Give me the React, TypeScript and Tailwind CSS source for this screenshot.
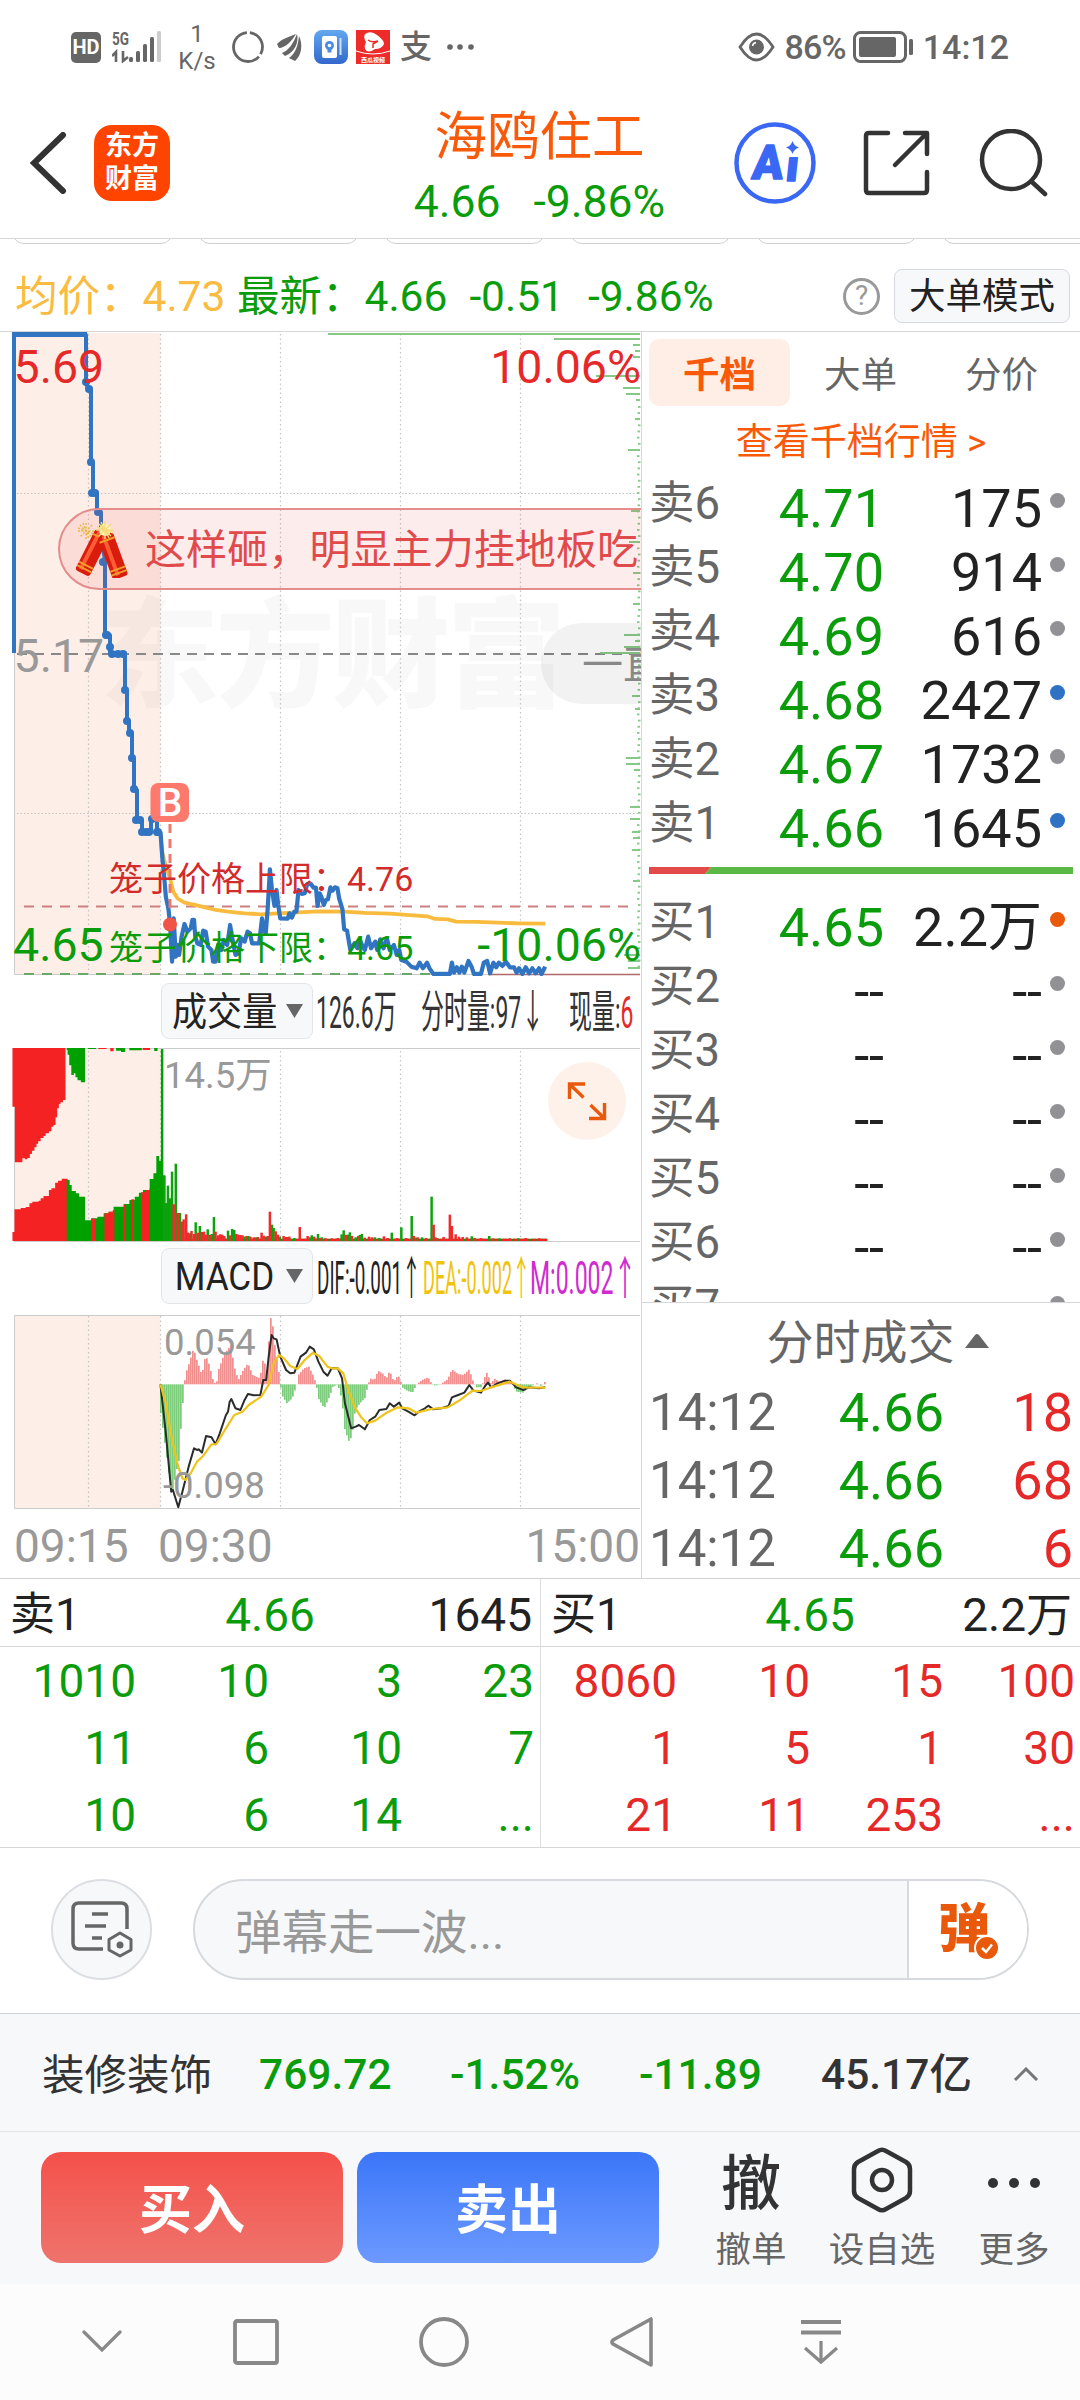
import { ReactNode } from 'react';

type Point = [number, number];

interface Level {
  label: string;
  price: string;
  volume: string;
  dot: 'gray' | 'blue' | 'orange';
}

const asks: Level[] = [
  { label: '卖6', price: '4.71', volume: '175', dot: 'gray' },
  { label: '卖5', price: '4.70', volume: '914', dot: 'gray' },
  { label: '卖4', price: '4.69', volume: '616', dot: 'gray' },
  { label: '卖3', price: '4.68', volume: '2427', dot: 'blue' },
  { label: '卖2', price: '4.67', volume: '1732', dot: 'gray' },
  { label: '卖1', price: '4.66', volume: '1645', dot: 'blue' },
];

const bids: Level[] = [
  { label: '买1', price: '4.65', volume: '2.2万', dot: 'orange' },
  { label: '买2', price: '--', volume: '--', dot: 'gray' },
  { label: '买3', price: '--', volume: '--', dot: 'gray' },
  { label: '买4', price: '--', volume: '--', dot: 'gray' },
  { label: '买5', price: '--', volume: '--', dot: 'gray' },
  { label: '买6', price: '--', volume: '--', dot: 'gray' },
  { label: '买7', price: '--', volume: '--', dot: 'gray' },
];

const trades = [
  { time: '14:12', price: '4.66', volume: '18' },
  { time: '14:12', price: '4.66', volume: '68' },
  { time: '14:12', price: '4.66', volume: '6' },
];

const sellQueue = ['1010', '10', '3', '23', '11', '6', '10', '7', '10', '6', '14', '...'];
const buyQueue = ['8060', '10', '15', '100', '1', '5', '1', '30', '21', '11', '253', '...'];

const dotColors = {
  gray: 'bg-[#919196]',
  blue: 'bg-[#2f72c4]',
  orange: 'bg-[#e8590c]',
};

// Call auction part of the price line, px
const auction: Point[] = [
  [14, 653], [14, 335], [86, 335], [86, 383], [88, 388], [91, 389], [91, 462], [93, 463], [93, 492], [97, 493],
  [97, 511], [101, 512], [101, 530], [105, 562], [105, 634], [110, 635], [110, 653], [125, 653], [125, 690],
  [127, 691], [127, 721], [129, 722], [129, 733], [132, 734], [132, 758], [134, 759], [134, 789], [137, 790],
  [137, 820], [142, 820], [142, 832], [151, 832], [151, 820], [157, 820], [157, 832], [160, 832],
];
const auctionDots: Point[] = [
  [86, 382], [89, 389], [91, 462], [92, 493], [95, 493], [98, 512], [103, 562], [106, 635], [107, 635], [110, 647],
  [112, 654], [118, 654], [123, 654], [125, 690], [127, 721], [130, 733], [132, 758], [134, 789], [136, 820], [140, 820],
  [142, 832], [146, 832], [149, 832], [152, 819], [157, 832], [158, 832],
];

// Continuous trading, plot units
const price: Point[] = [
  [387, 515], [392, 600], [396, 650], [400, 710], [406, 745], [410, 790], [415, 905], [419, 775], [424, 890], [428, 855],
  [432, 885], [438, 830], [445, 792], [452, 815], [460, 805], [464, 780], [468, 780], [471, 830], [476, 850], [484, 855],
  [490, 812], [496, 815], [502, 860], [510, 870], [514, 905], [520, 905], [526, 855], [534, 870], [540, 840], [548, 855],
  [555, 795], [561, 840], [568, 885], [575, 880], [582, 835], [590, 845], [597, 815], [603, 820], [608, 850], [625, 850],
  [632, 775], [637, 815], [641, 820], [646, 740], [651, 628], [656, 690], [662, 738], [667, 690], [671, 735], [676, 775],
  [694, 776], [698, 760], [704, 773], [710, 755], [715, 755], [720, 690], [728, 702], [735, 700], [741, 672], [750, 672],
  [756, 683], [762, 683], [766, 738], [771, 700], [775, 710], [781, 735], [786, 720], [791, 718], [797, 682], [802, 692],
  [808, 682], [814, 685], [818, 715], [826, 748], [830, 808], [837, 812], [845, 870], [855, 850], [862, 865], [868, 840],
  [875, 860], [880, 870], [888, 830], [895, 865], [905, 845], [910, 870], [917, 838], [925, 865], [933, 835], [940, 870],
  [950, 855], [957, 885], [963, 870], [968, 900], [980, 905], [992, 920], [1005, 925], [1012, 908], [1020, 925],
  [1030, 908], [1036, 925], [1045, 942], [1085, 942], [1090, 908], [1095, 938], [1102, 922], [1108, 938], [1114, 920],
  [1120, 938], [1130, 903], [1138, 922], [1143, 942], [1160, 942], [1167, 908], [1175, 903], [1182, 940], [1190, 908],
  [1197, 922], [1203, 908], [1212, 918], [1220, 905], [1230, 922], [1240, 922], [1246, 938], [1252, 925], [1260, 942],
  [1268, 922], [1276, 940], [1284, 925], [1292, 940], [1300, 925], [1306, 942], [1315, 920],
];

const average: Point[] = [
  [387, 520], [390, 570], [396, 600], [403, 630], [410, 655], [418, 695], [428, 715], [445, 728], [470, 735], [495, 742],
  [520, 750], [550, 755], [590, 760], [630, 763], [670, 760], [720, 757], [770, 754], [830, 755], [880, 759], [940, 761],
  [980, 765], [1030, 769], [1050, 777], [1080, 778], [1100, 785], [1150, 786], [1200, 788], [1250, 790], [1315, 791],
];

// Resting volume per price on the right edge: [y, width]
const depth: Point[] = [
  [334, 312], [339, 86], [345, 7], [351, 5], [357, 7], [376, 44], [388, 17], [394, 14], [400, 4], [419, 5], [450, 12],
  [511, 9], [542, 11], [573, 7], [604, 7], [635, 16], [641, 5], [647, 16], [653, 40], [696, 8], [709, 5], [758, 14],
  [764, 14], [770, 6], [807, 10], [819, 10], [832, 8], [838, 7], [850, 8], [881, 7], [955, 16], [961, 12], [968, 12],
];
const ticks = Array.from({ length: 92 }, (_, i) => 407 + i * 6.15).filter((y) => y < 972);

// Volume bars, plot units: [x, top]
const redVolume: Point[] = [
  [419, 523], [429, 549], [439, 575], [443, 568], [449, 553], [453, 608], [462, 603], [468, 612], [477, 608], [487, 606],
  [492, 605], [497, 614], [506, 615], [520, 605], [526, 616], [531, 613], [536, 614], [541, 618], [555, 616], [570, 612],
  [575, 614], [580, 615], [585, 616], [595, 618], [604, 620], [612, 622], [622, 621], [631, 608], [636, 617], [646, 618],
  [651, 545], [665, 604], [670, 614], [684, 618], [690, 621], [698, 620], [723, 591], [742, 618], [758, 620], [772, 624],
  [785, 625], [800, 625], [815, 624], [834, 615], [849, 618], [864, 618], [880, 623], [890, 620], [897, 622], [926, 619],
  [935, 624], [958, 624], [980, 624], [998, 618], [1008, 622], [1028, 624], [1046, 584], [1055, 624], [1070, 621],
  [1085, 554], [1090, 588], [1099, 613], [1107, 620], [1116, 621], [1126, 622], [1145, 624], [1160, 624], [1190, 625],
  [1230, 625], [1268, 624], [1300, 625],
];
const greenVolume: Point[] = [
  [396, 438], [401, 520], [405, 467], [410, 505], [415, 425], [424, 401], [434, 549], [458, 610], [472, 577], [482, 588],
  [501, 598], [511, 612], [516, 561], [550, 602], [560, 597], [565, 600], [590, 620], [599, 618], [617, 622], [641, 620],
  [656, 584], [660, 594], [675, 620], [694, 621], [710, 624], [748, 622], [752, 616], [767, 612], [776, 622], [824, 613],
  [829, 601], [839, 614], [844, 607], [858, 622], [868, 615], [873, 612], [904, 622], [915, 624], [945, 608], [968, 592],
  [993, 558], [1003, 623], [1018, 622], [1041, 500], [1050, 622], [1138, 619], [1180, 618], [1205, 625], [1250, 625],
];

// Histogram outline and both averages of the MACD, plot units
const histogram: Point[] = [
  [387, 330], [400, 450], [415, 590], [425, 515], [432, 480], [437, 370], [443, 280], [445, 253], [447, 225], [455, 195],
  [467, 145], [475, 180], [487, 225], [496, 165], [505, 195], [515, 245], [522, 253], [527, 210], [540, 165], [557, 135],
  [565, 200], [575, 240], [587, 210], [598, 190], [610, 225], [627, 235], [635, 175], [645, 215], [651, 60], [656, 48],
  [661, 120], [670, 190], [676, 250], [680, 285], [692, 310], [705, 295], [716, 253], [720, 225], [733, 205], [745, 200],
  [755, 225], [763, 253], [768, 295], [782, 325], [795, 290], [803, 260], [815, 253], [825, 300], [832, 390], [843, 428],
  [850, 400], [857, 330], [868, 310], [880, 295], [888, 253], [893, 235], [903, 240], [912, 212], [925, 222], [932, 235],
  [940, 212], [950, 245], [958, 230], [965, 230], [968, 253], [972, 264], [982, 272], [995, 278], [1005, 253],
  [1018, 240], [1033, 232], [1042, 253], [1050, 257], [1062, 253], [1080, 238], [1090, 208], [1105, 222], [1118, 225],
  [1132, 208], [1140, 240], [1150, 262], [1162, 262], [1168, 235], [1175, 217], [1185, 253], [1192, 235], [1205, 245],
  [1220, 238], [1236, 250], [1245, 275], [1262, 278], [1275, 262], [1295, 250], [1305, 258], [1315, 245],
];
const dif: Point[] = [
  [387, 253], [400, 400], [413, 575], [417, 570], [430, 622], [440, 575], [455, 500], [468, 445], [475, 450], [479, 448],
  [487, 458], [497, 408], [510, 412], [520, 433], [530, 400], [545, 345], [550, 335], [554, 305], [558, 297], [568, 325],
  [580, 330], [590, 300], [598, 282], [612, 286], [628, 285], [635, 240], [642, 240], [648, 170], [655, 105], [660, 115],
  [667, 118], [676, 170], [690, 210], [700, 220], [710, 218], [725, 170], [738, 158], [747, 140], [757, 148], [768, 185],
  [780, 215], [790, 227], [800, 205], [815, 205], [825, 235], [832, 310], [847, 385], [858, 380], [866, 375], [880, 388],
  [892, 360], [905, 350], [915, 330], [932, 327], [940, 310], [950, 320], [963, 308], [970, 325], [985, 335], [1000, 346],
  [1010, 335], [1025, 325], [1033, 317], [1045, 328], [1065, 325], [1082, 318], [1090, 292], [1105, 285], [1120, 278],
  [1132, 255], [1142, 272], [1160, 278], [1170, 258], [1177, 248], [1185, 262], [1200, 250], [1218, 242], [1230, 242],
  [1245, 262], [1262, 270], [1275, 262], [1300, 265], [1315, 262],
];
const dea: Point[] = [
  [387, 253], [400, 310], [415, 420], [430, 500], [440, 535], [447, 540], [460, 520], [475, 485], [490, 468], [510, 433],
  [522, 432], [540, 395], [565, 345], [585, 335], [600, 315], [630, 290], [648, 255], [660, 190], [673, 165], [685, 175],
  [700, 198], [717, 207], [735, 180], [755, 158], [770, 168], [790, 200], [800, 205], [815, 205], [828, 220], [840, 270],
  [855, 320], [870, 350], [885, 370], [905, 362], [930, 340], [960, 322], [985, 325], [1005, 338], [1040, 327],
  [1080, 322], [1110, 300], [1140, 272], [1160, 273], [1185, 262], [1230, 245], [1260, 262], [1315, 263],
];

const toPath = (points: Point[]) => points.map(([x, y], i) => `${i ? 'L' : 'M'}${x} ${y}`).join(' ');

const valueAt = (points: Point[], x: number) => {
  const i = points.findIndex((p) => p[0] >= x);
  if (i <= 0) return points[0][1];
  const [x0, y0] = points[i - 1];
  const [x1, y1] = points[i];
  return y0 + ((y1 - y0) * (x - x0)) / (x1 - x0);
};

function Grid({ top, bottom }: { top: number; bottom: number }) {
  return (
    <g stroke="#c4c4c4" strokeWidth="1.2" strokeDasharray="1.5 3">
      {[88.5, 160.5, 280.5, 400.5, 520.5].map((x) => (
        <path key={x} d={`M${x} ${top}V${bottom}`} />
      ))}
    </g>
  );
}

function PriceChart() {
  return (
    <svg className="block" width="641" height="644" viewBox="0 332 641 644" fontSize="46.5">
      <rect x="14" y="333" width="146.5" height="641" fill="#fdeee8" />
      <text x="100" y="698" fontSize="119" fontWeight="900" fill="#000" fillOpacity="0.028" textLength="466">东方财富</text>
      <Grid top={334} bottom={974} />
      <path d="M17 493.5H640M17 813.5H640" stroke="#c4c4c4" strokeWidth="1.2" strokeDasharray="1.5 2" />
      <path d="M14.5 333V974.5H640" stroke="#ccc" fill="none" />
      <path d="M488 974.5H640" stroke="#b06a6a" strokeWidth="1.4" />
      <path d="M17 654H640" stroke="#888" strokeWidth="2" strokeDasharray="10 7" />
      <g fill="#86c986">
        {depth.map(([y, w]) => (
          <rect key={y} x={640 - w} y={y - 1} width={w} height="2" />
        ))}
        {ticks.map((y, i) => (
          <rect key={y} x={638 - (i % 3) * 0.5} y={y - 1} width="2.5" height="1.8" />
        ))}
      </g>
      <path d="M24 906.5H632" stroke="#cc8080" strokeWidth="2" strokeDasharray="10 8" />
      <path d="M24 974H430" stroke="#6aa86a" strokeWidth="2" strokeDasharray="10 8" />
      <g fill="none" strokeLinejoin="round">
        <path d={toPath(average)} transform="translate(0 660) scale(.4146 .3333)" vectorEffect="non-scaling-stroke" stroke="#f9bb3d" strokeWidth="3.8" />
        <path d={toPath(auction)} stroke="#3074c2" strokeWidth="4" />
        <path d="M12 334.5H87" stroke="#3074c2" strokeWidth="5" />
        <path d={toPath(price)} transform="translate(0 660) scale(.4146 .3333)" vectorEffect="non-scaling-stroke" stroke="#3074c2" strokeWidth="4.2" />
      </g>
      <g fill="#3074c2">
        {auctionDots.map(([x, y], i) => (
          <circle key={i} cx={x} cy={y} r="4" />
        ))}
      </g>
      <path d="M170 824V908" stroke="#ee7a6c" strokeWidth="3" strokeDasharray="9 6" />
      <circle cx="170" cy="924.5" r="7" fill="#ee5548" />
      <rect x="150.5" y="783" width="38.5" height="39" rx="8" fill="#fd796b" />
      <text x="170" y="816" fontSize="39" fontWeight="500" fill="#fff" textAnchor="middle">B</text>
      <g fontSize="34">
        <text x="109" y="891" fill="#d22b2b">笼子价格上限：4.76</text>
        <text x="109" y="959.5" fill="#0a9c0a">笼子价格下限：4.65</text>
      </g>
      <text x="13.5" y="383" fill="#e52929">5.69</text>
      <text x="641" y="383" fill="#e52929" textAnchor="end">10.06%</text>
      <text x="13.5" y="672" fill="#999">5.17</text>
      <text x="13" y="961" fill="#0a9c0a">4.65</text>
      <text x="641" y="961" fill="#0a9c0a" textAnchor="end">-10.06%</text>
    </svg>
  );
}

function VolumeChart() {
  return (
    <svg className="block" width="641" height="199" viewBox="0 1045 641 199">
      <rect x="14" y="1048" width="146.5" height="193" fill="#fdeee8" />
      <Grid top={1051} bottom={1241} />
      <path d="M14 1048.5H640M14.5 1048V1241M14 1241.5H640" stroke="#ccc" fill="none" />
      <g transform="translate(0 1030) scale(.4146 .3333)">
        <path fill="#f42222" d="M30 54H158V210H152V217H146V222H142V235H138V262H134V285H129V290H124V304H118V310H110V318H105V324H98V334H92V341H88V352H83V362H77V372H72V384H66V388H60V385H54V397H36V230H30Z" />
        <path fill="#00a000" d="M161 54H205V157H195V151H187V142H182V130H178V135H172V106H167V74H163V60H161Z" />
        <path fill="#f42222" d="M30 633V606H35V538H50V534H62V531H71V520H78V515H93V512H98V505H105V498H118V480H124V475H133V458H140V452H149V446H163V633Z" />
        <path fill="#00a000" d="M161 633V450H168V465H173V483H183V490H191V500H205V571H220V565H235V560H250V550H262V545H274V530H298V522H312V510H325V500H335V488H345V480H361V447H370V430H377V378H384V392H388V57H394V436H399V520H411V545H420V633Z" />
        <path fill="#f42222" d="M220 633V566H230V633ZM252 633V550H262V545H272V540H276V633ZM299 633V524H303V633ZM317 633V508H323V633ZM340 633V487H350V480H360V475H361V633Z" />
        <path fill="#00a000" d="M212 54H232V57H212ZM280 54H302V66H292V62H280ZM312 54H342V61H312ZM372 54H380V63H372Z" />
        <path fill="#f42222" d="M237 54H257V57H237ZM266 54H274V64H266ZM344 54H362V60H344Z" />
        <path fill="#00a000" d="M452 626H1320V633H452Z" />
        <path stroke="#f42222" strokeWidth="7" strokeDasharray="22 5 38 7 12 4" d="M418 629.5H1320" />
        {greenVolume.map(([x, y]) => (
          <rect key={x} x={x - 3} y={y} width="6" height={633 - y} fill="#0ea30e" />
        ))}
        {redVolume.map(([x, y]) => (
          <rect key={x} x={x - 3} y={y} width="6" height={633 - y} fill="#ef2b2b" />
        ))}
      </g>
      <text x="164" y="1088" fontSize="36.5" fill="#999">14.5万</text>
      <circle cx="587" cy="1101" r="39" fill="#fef1ea" />
      <path d="M569.5 1099V1084H585M570 1084.5L583.5 1097.5M604.5 1103V1118.5H589M604 1118L590.5 1105" stroke="#e8590c" strokeWidth="3.4" fill="none" />
    </svg>
  );
}

function MacdChart() {
  const bars = Array.from({ length: 193 }, (_, i) => 388 + i * 4.824);
  return (
    <svg className="block" width="641" height="202" viewBox="0 1308 641 202" fontSize="36.5">
      <rect x="14" y="1315" width="146.5" height="193" fill="#fdeee8" />
      <Grid top={1316} bottom={1508} />
      <path d="M640 1315.5H14.5V1508.5H640" stroke="#ccc" fill="none" />
      <g transform="translate(0 1300) scale(.4146 .3333)">
        {bars.map((x) => {
          const y = valueAt(histogram, x);
          return <rect key={x} x={x - 1.8} y={Math.min(y, 253)} width="3.7" height={Math.abs(253 - y)} fill={y < 253 ? '#ef8080' : '#6cc66c'} />;
        })}
      </g>
      <text x="164" y="1355" fill="#999">0.054</text>
      <g transform="translate(0 1300) scale(.4146 .3333)" fill="none" strokeLinejoin="round">
        <path d={toPath(dif)} vectorEffect="non-scaling-stroke" stroke="#2b2b2b" strokeWidth="2" />
        <path d={toPath(dea)} vectorEffect="non-scaling-stroke" stroke="#efc31b" strokeWidth="2.2" />
      </g>
      <text x="163" y="1498" fill="#999">-0.098</text>
    </svg>
  );
}

function IndicatorButton({ children }: { children: ReactNode }) {
  return (
    <button className="ml-[161px] flex h-14 w-[152px] shrink-0 items-center rounded-lg border border-[#e3e5e8] bg-[#f7f8fa] pl-[10px] text-[39px] leading-none text-[#222]">
      <span className="w-[114px] pt-[3px] text-left"><span className="inline-block origin-left scale-x-90 whitespace-nowrap">{children}</span></span>
      <svg width="17" height="14"><path d="M0 0H17L8.5 14Z" fill="#666" /></svg>
    </button>
  );
}

function Danmaku() {
  return (
    <div className="absolute left-[58px] top-[176px] flex h-[82px] w-[900px] items-center rounded-full border-2 border-[#e58c8c] bg-[#f04848]/10">
      <svg className="ml-[16px]" width="54" height="58" viewBox="0 0 54 58">
        <g stroke="#e8b84a" strokeWidth="1.4">
          <path d="M10 3V19M2 11H18M4 5L16 17M16 5L4 17M7 3L13 19M2 8L18 14" strokeDasharray="2 1.5" />
        </g>
        <g transform="rotate(27 26 14)">
          <rect x="18" y="12" width="16" height="46" rx="3" fill="#d91c0c" />
          <rect x="21" y="13" width="4" height="42" fill="#ff5b35" />
          <path d="M18 18H34M18 49H34M18 53H34" stroke="#f0a02a" strokeWidth="2" />
        </g>
        <g transform="rotate(-20 30 14)">
          <rect x="21" y="14" width="16" height="46" rx="3" fill="#d91c0c" />
          <rect x="25" y="15" width="4" height="42" fill="#ff5b35" />
          <path d="M21 20H37M21 51H37M21 55H37" stroke="#f0a02a" strokeWidth="2" />
        </g>
        <circle cx="29" cy="10" r="6" fill="#fff6c0" />
        <path d="M29 1V19M20 10H38M23 4L35 16M35 4L23 16M25 2L33 18M21 7L37 13" stroke="#f6dc7c" strokeWidth="1.4" />
      </svg>
      <span className="ml-[15px] whitespace-nowrap pt-[3px] text-[41.1px] leading-none text-[#e04a4a]">这样砸，明显主力挂地板吃</span>
    </div>
  );
}

function BookRow({ level }: { level: Level }) {
  return (
    <div className="flex h-16 items-center">
      <span className="w-[96px] text-[45.5px] leading-[56px] text-[#666]">{level.label}</span>
      <span className={`w-[139px] pt-[9px] text-right text-[54px] leading-[54px] ${level.price === '--' ? 'text-[#222]' : 'text-[#0a9c0a]'}`}>{level.price}</span>
      <span className="w-[158px] whitespace-nowrap pt-[9px] text-right text-[54px] leading-[54px] text-[#222]">{level.volume}</span>
      <span className={`mb-[7px] ml-2 size-[15px] rounded-full ${dotColors[level.dot]}`} />
    </div>
  );
}

function Queue({ values, color }: { values: string[]; color: string }) {
  return (
    <div className={`grid w-[540px] grid-cols-[136px_133px_133px_132px] pt-[1px] text-right text-[46px] leading-[67px] ${color}`}>
      {values.map((v, i) => (
        <span key={i}>{v}</span>
      ))}
    </div>
  );
}

function StatusBar() {
  return (
    <div className="flex h-[94px] items-center pl-[71px] pr-[71px] text-[#666]">
      <span className="flex h-[31px] w-[30px] items-center justify-center rounded-[5px] bg-[#666] text-[20px] font-bold leading-none text-white">HD</span>
      <svg className="ml-[11px]" width="50" height="32" viewBox="0 0 50 32" fill="#666">
        <text x="0" y="14" fontSize="19" fontWeight="700" textLength="17" lengthAdjust="spacingAndGlyphs">5G</text>
        <path d="M4 31V21L0 25M11 20V30L16 26" stroke="#666" strokeWidth="2.6" fill="none" />
        <rect x="17" y="26" width="4" height="5" rx="1.5" />
        <rect x="24" y="20" width="4" height="11" rx="1.5" />
        <rect x="31" y="13" width="4" height="18" rx="1.5" />
        <rect x="38" y="6" width="4" height="25" rx="1.5" />
        <rect x="45" y="0" width="4" height="31" rx="1.5" fill="#ccc" />
      </svg>
      <div className="ml-[17px] flex w-[36px] flex-col items-center pt-[2px] text-[24px] leading-[27px]">
        <span>1</span>
        <span>K/s</span>
      </div>
      <svg className="ml-[16px]" width="34" height="34" viewBox="0 0 34 34"><circle cx="17" cy="17" r="14.5" fill="none" stroke="#666" strokeWidth="2.8" strokeDasharray="7.4 3 56.4 3 21.3" /></svg>
      <svg className="ml-[12px]" width="26" height="28" viewBox="0 0 26 28" fill="#666">
        <path d="M0 11C6 5 12 4 19 1C15 8 8 15 2 15Z" />
        <path d="M5 20C12 17 16 11 20 1C22 9 18 19 8 23Z" />
        <path d="M12 25C19 20 21 12 22 3C26 11 25 22 18 28Z" />
      </svg>
      <svg className="ml-[11px]" width="34" height="34" viewBox="0 0 34 34">
        <defs>
          <linearGradient id="tip" x1="0" y1="0" x2="0" y2="1"><stop stopColor="#62a8ee" /><stop offset="1" stopColor="#3268cc" /></linearGradient>
        </defs>
        <rect width="34" height="34" rx="8" fill="url(#tip)" />
        <rect x="8" y="6" width="15" height="22" rx="2" fill="#fff" />
        <path d="M26.5 8V25" stroke="#cfe2fb" strokeWidth="2" />
        <circle cx="15.5" cy="15.5" r="4.5" fill="#4c8cdf" />
        <path d="M13.5 19H17.5V22.5H13.5Z" fill="#4c8cdf" />
        <circle cx="15.5" cy="15.5" r="1.8" fill="#fff" />
      </svg>
      <svg className="ml-[8px]" width="34" height="34" viewBox="0 0 34 34">
        <rect width="34" height="34" fill="#ee2a2a" />
        <path d="M9 4Q15 0 21 5Q28 10 28 14Q26 19 19 19Q12 24 9 19Q8 16 10 12Q7 7 9 4Z" fill="#fff" />
        <path d="M12 10Q16 13 22 11L17 14V18" stroke="#ee2a2a" strokeWidth="1.5" fill="none" />
        <path d="M0 21Q17 27 34 21" stroke="#fff" fill="none" />
        <text x="17" y="31.5" fontSize="6" fontWeight="700" fill="#fff" textAnchor="middle">西瓜视频</text>
      </svg>
      <span className="ml-[10px] w-[33px] text-[32px] font-medium leading-none">支</span>
      <svg className="ml-[13px]" width="28" height="8" fill="#666"><circle cx="4" cy="4" r="2.8" /><circle cx="14" cy="4" r="2.8" /><circle cx="25" cy="4" r="2.8" /></svg>

      <svg className="ml-auto" width="37" height="30" viewBox="0 0 37 30">
        <path d="M2 15Q18.5 -11 35 15Q18.5 41 2 15Z" fill="none" stroke="#666" strokeWidth="2.8" />
        <circle cx="18.5" cy="15" r="7.5" fill="#666" />
        <path d="M14.5 14Q15 11 18 10.5" stroke="#fff" strokeWidth="1.5" fill="none" />
      </svg>
      <span className="ml-[9px] text-[34px] font-medium leading-none tracking-[-0.8px]">86%</span>
      <svg className="ml-[7px]" width="60" height="32" viewBox="0 0 60 32">
        <rect x="1.5" y="1.5" width="51" height="29" rx="6" fill="none" stroke="#666" strokeWidth="3" />
        <rect x="6" y="6" width="37" height="20" rx="2" fill="#666" />
        <rect x="56" y="8" width="4" height="16" rx="1.5" fill="#666" />
      </svg>
      <span className="ml-[10px] text-[34px] font-medium leading-none">14:12</span>
    </div>
  );
}

function Header() {
  return (
    <header className="grid h-[145px] grid-cols-[1fr_auto_1fr] items-center border-b border-[#d5d6d8]">
      <div className="flex items-center pb-[6px] pl-[30px]">
        <svg width="38" height="62" viewBox="0 0 38 62"><path d="M33 3L4 31L33 59" fill="none" stroke="#333" strokeWidth="6" strokeLinecap="round" strokeLinejoin="miter" /></svg>
        <div className="ml-[26px] flex size-[76px] flex-col items-center justify-center rounded-[18px] bg-[#ff4400] text-[27px] font-bold leading-[33px] text-white">
          <span>东方</span>
          <span>财富</span>
        </div>
      </div>
      <div className="pr-[1px] text-center leading-none">
        <h1 className="pt-[5px] text-[52.5px] leading-[72px] text-[#f95a0a]">海鸥住工</h1>
        <p className="flex justify-center gap-[33px] pb-[5px] text-[44.5px] leading-[58px] text-[#0a9c0a]">
          <span>4.66</span>
          <span>-9.86%</span>
        </p>
      </div>
      <div className="flex items-center justify-end pb-[6px] pr-[31px]">
        <svg width="82" height="82" viewBox="0 0 82 82">
          <circle cx="41" cy="41" r="38.5" fill="none" stroke="#3a68f5" strokeWidth="4.5" />
          <g fontSize="48" fontWeight="900" fill="#3a68f5" stroke="#3a68f5" strokeWidth="1.5" strokeLinejoin="round">
            <text transform="translate(17 57) skewX(-6)" textLength="31" lengthAdjust="spacingAndGlyphs">A</text>
            <text transform="translate(50.5 59) skewX(-6) scale(.95 .92)">ı</text>
          </g>
          <path d="M58.5 19Q60 24 65 25.5Q60 27 58.5 32Q57 27 52 25.5Q57 24 58.5 19Z" fill="#3a68f5" />
        </svg>
        <svg className="ml-[47px]" width="68" height="68" viewBox="0 0 68 68" fill="none" stroke="#333" strokeWidth="4.5" strokeLinecap="round" strokeLinejoin="round">
          <path d="M25 4H6Q3 4 3 7V61Q3 64 6 64H61Q64 64 64 61V43M42 4H64V25M62 6L32 36" />
        </svg>
        <svg className="ml-[48px]" width="70" height="68" viewBox="0 0 70 68" fill="none" stroke="#333" strokeWidth="4.5" strokeLinecap="round">
          <circle cx="32" cy="31" r="29" />
          <path d="M53 53L66 65" />
        </svg>
      </div>
    </header>
  );
}

export default function App() {
  return (
    <main className="flex h-[2400px] w-[1080px] flex-col overflow-hidden bg-white font-['Roboto','Noto_Sans_CJK_SC',sans-serif] text-[#222]">
      <StatusBar />
      <Header />

      {/* Bottom edge of the quick links that scrolled under the header */}
      <div className="flex h-[5px] shrink-0 items-end gap-[25px] overflow-hidden pl-[12px]">
        {[0, 1, 2, 3, 4, 5].map((i) => (
          <div key={i} className="h-12 w-[161px] shrink-0 rounded-[12px] border border-[#d0d0d2]" />
        ))}
      </div>

      <div className="flex h-[88px] shrink-0 items-center whitespace-nowrap border-b border-[#d5d6d8] pl-[15px] pr-[10px] pt-[17px] text-[42.5px] leading-none">
        <span className="w-[222px] pt-[2px] text-[#fabb42]">均价：4.73</span>
        <span className="pt-[2px] text-[#0a9c0a]">最新：4.66</span>
        <span className="ml-[22px] pt-[2px] text-[#0a9c0a]">-0.51</span>
        <span className="ml-[24px] pt-[2px] text-[#0a9c0a]">-9.86%</span>
        <span className="ml-auto flex size-[37px] items-center justify-center rounded-full border-[3px] border-[#999] text-[28px] text-[#999]">?</span>
        <button className="ml-[14px] flex h-[54px] w-[176px] items-center justify-center rounded-lg border border-[#d8dadf] bg-[#f7f8fa] pt-[3px] text-[36.5px]">大单模式</button>
      </div>

      <section className="flex h-[1247px] shrink-0 border-b border-[#cfd1d3]">
        <div className="relative w-[641px] shrink-0 overflow-hidden">
          <PriceChart />
          <Danmaku />
          <div className="absolute left-[541px] top-[291px] flex h-[81px] w-[300px] items-center rounded-full bg-black/5 pl-[41px] pt-[3px] text-[41px] leading-none text-[#888]">一直</div>

          <div className="flex h-[69px] items-center whitespace-nowrap text-[45px] leading-none text-[#333]">
            <IndicatorButton>成交量</IndicatorButton>
            <span className="ml-[3px] w-[105px] pt-[4px]"><span className="inline-block origin-left scale-x-[.51]">126.6万</span></span>
            <span className="w-[148px] pt-[4px]"><span className="inline-block origin-left scale-x-[.51]">分时量:97↓</span></span>
            <span className="w-[66px] pt-[4px]"><span className="inline-block origin-left scale-x-[.51]">现量:<span className="text-[#e52929]">6</span></span></span>
          </div>

          <VolumeChart />

          <div className="flex h-[64px] items-center whitespace-nowrap text-[46px] leading-none">
            <IndicatorButton><span className="pl-[3px]">MACD</span></IndicatorButton>
            <span className="ml-[4px] w-[106px] pt-[4px] text-[#222]"><span className="inline-block origin-left scale-x-[.41]">DIF:-0.001↑</span></span>
            <span className="w-[107px] pt-[4px] text-[#f0c30f]"><span className="inline-block origin-left scale-x-[.395]">DEA:-0.002↑</span></span>
            <span className="w-[105px] pt-[4px] text-[#d02bd0]"><span className="inline-block origin-left scale-x-[.5]">M:0.002↑</span></span>
          </div>

          <MacdChart />

          <div className="flex h-[69px] items-center pl-[14px] pr-[1px] pt-[2px] text-[46px] leading-none text-[#999]">
            <span className="w-[144px]">09:15</span>
            <span>09:30</span>
            <span className="ml-auto">15:00</span>
          </div>
        </div>

        <div className="flex w-[439px] flex-col border-l border-[#d5d7da]">
          <div className="h-[970px] overflow-hidden pl-[7px] pt-[7px]">
            <div className="flex h-[67px] text-center text-[36.5px] leading-[73px] text-[#666]">
              <span className="h-[67px] w-[141px] rounded-[10px] bg-[#ffeee6] font-bold text-[#f95a0a]">千档</span>
              <span className="w-[141px]">大单</span>
              <span className="w-[141px]">分价</span>
            </div>
            <p className="h-[66px] w-[424px] pt-[4px] text-center text-[37px] leading-[66px] text-[#f95a0a]">查看千档行情 &gt;</p>
            {asks.map((level) => (
              <BookRow key={level.label} level={level} />
            ))}
            <svg className="mb-[17px] mt-[11px] block" width="424" height="7">
              <path d="M0 0H62L56 7H0Z" fill="#e34b4b" />
              <path d="M62 0H424V7H56Z" fill="#5cb845" />
            </svg>
            {bids.map((level) => (
              <BookRow key={level.label} level={level} />
            ))}
          </div>
          <div className="flex-1 overflow-hidden border-t border-[#d5d7da]">
            <div className="flex h-[74px] items-center justify-center pl-[33px] pt-[4px] text-[47px] leading-none text-[#666]">
              分时成交
              <svg className="mb-[3px] ml-[10px]" width="24" height="14"><path d="M0 14L10 1Q12 -1 14 1L24 14Z" fill="#666" /></svg>
            </div>
            {trades.map((t, i) => (
              <div key={i} className="flex h-[68px] items-center pl-[7px] pt-[3px] text-[54px] leading-none">
                <span className="w-[180px] text-[51px] text-[#666]">{t.time}</span>
                <span className="w-[115px] text-right text-[#0a9c0a]">{t.price}</span>
                <span className="w-[129px] text-right text-[#e52929]">{t.volume}</span>
              </div>
            ))}
          </div>
        </div>
      </section>

      <section className="shrink-0">
        <div className="flex h-[68px] border-b border-[#d5d6d8] text-[46px] leading-[72px]">
          <div className="flex w-[541px] justify-between border-r border-[#dcdddf] pl-[10px] pr-[8px]">
            <span className="w-[120px] text-[45px]">卖1</span>
            <span className="-ml-[2px] text-[#0a9c0a]">4.66</span>
            <span className="w-[120px] text-right">1645</span>
          </div>
          <div className="flex flex-1 justify-between pl-[10px] pr-[8px]">
            <span className="w-[120px] text-[45px]">买1</span>
            <span className="-ml-[3px] text-[#0a9c0a]">4.65</span>
            <span className="w-[120px] whitespace-nowrap text-right">2.2万</span>
          </div>
        </div>
        <div className="flex h-[201px] overflow-hidden border-b border-[#d5d6d8]">
          <div className="w-[541px] shrink-0 border-r border-[#dcdddf]">
            <Queue values={sellQueue} color="text-[#0a9c0a]" />
          </div>
          <Queue values={buyQueue} color="text-[#e52929]" />
        </div>
      </section>

      <div className="flex h-[166px] shrink-0 items-center border-b border-[#d0d3d4] pb-[3px] pl-[51px]">
        <button className="flex size-[101px] items-center justify-center rounded-full border-2 border-[#dcdee3] bg-[#f7f8fa]">
          <svg width="64" height="58" viewBox="0 0 64 58" fill="none" stroke="#666" strokeWidth="3.5">
            <path d="M33 49H9Q3 49 3 43V9Q3 3 9 3H51Q57 3 57 9V29M22 14H38M15 26H36M22 38H32" />
            <path d="M50 33L61 39.5V50L50 56L39 50V39.5Z" strokeWidth="3" strokeLinejoin="round" />
            <circle cx="50" cy="45" r="2.5" fill="#666" strokeWidth="2" />
          </svg>
        </button>
        <div className="ml-[41px] flex h-[101px] w-[836px] overflow-hidden rounded-full border-2 border-[#d6d9dd] bg-[#f7f8fa]">
          <span className="flex-1 pl-[40px] text-[46.5px] leading-[104px] text-[#999]">弹幕走一波...</span>
          <button className="relative w-[120px] border-l-2 border-[#d6d9dd] bg-white pl-[29px] text-left text-[52px] font-black leading-[97px] text-[#e8590c]">
            弹
            <svg className="absolute left-[65px] top-[54px]" width="26" height="26" viewBox="0 0 26 26">
              <circle cx="13" cy="13" r="12" fill="#e8590c" stroke="#fff" strokeWidth="2" />
              <path d="M8 13L12 17L18 9.5" fill="none" stroke="#fff" strokeWidth="2.5" />
            </svg>
          </button>
        </div>
      </div>

      <div className="flex h-[118px] shrink-0 items-center whitespace-nowrap border-b border-[#e2e4e7] bg-[#f7f8fa] pl-[42px] pt-[6px] text-[42.5px] font-medium leading-none text-[#0a9c0a]">
        <span className="w-[217px] pt-[1px] font-normal text-[#333]">装修装饰</span>
        <span className="w-[191px]">769.72</span>
        <span className="w-[189px]">-1.52%</span>
        <span className="w-[182px]">-11.89</span>
        <span className="w-[192px] text-[#333]">45.17亿</span>
        <svg className="mb-[3px]" width="26" height="14" viewBox="0 0 26 14"><path d="M2 13L13 2L24 13" fill="none" stroke="#777" strokeWidth="3" /></svg>
      </div>

      <div className="flex h-[152px] shrink-0 bg-[#f7f8fa] pl-[41px] pt-[20px]">
        <button className="h-[111px] w-[302px] rounded-[20px] bg-gradient-to-b from-[#f4504a] to-[#ee736c] pt-[9px] text-[53px] font-bold text-white">买入</button>
        <button className="ml-[14px] h-[111px] w-[302px] rounded-[20px] bg-gradient-to-b from-[#3b76f8] to-[#6c99ff] pt-[9px] text-[53px] font-bold text-white">卖出</button>
        <div className="-mt-[5px] ml-[51px] flex text-center text-[35.5px] leading-[58px] text-[#666]">
          <div className="flex w-[82px] flex-col items-center">
            <span className="h-[74px] text-[60px] font-medium leading-[75px] text-[#333]">撤</span>
            <span>撤单</span>
          </div>
          <div className="ml-[27px] flex w-[126px] flex-col items-center">
            <svg className="mb-[8px]" width="62" height="66" viewBox="0 0 62 66" fill="none" stroke="#333" strokeWidth="4.5" strokeLinejoin="round">
              <path d="M27 4Q31 1.5 35 4L55 15Q59 17.5 59 22V44Q59 48.5 55 51L35 62Q31 64.5 27 62L7 51Q3 48.5 3 44V22Q3 17.5 7 15Z" />
              <circle cx="31" cy="33" r="10" />
            </svg>
            <span>设自选</span>
          </div>
          <div className="ml-[19px] flex w-[100px] flex-col items-center">
            <svg className="mb-[8px]" width="54" height="66" viewBox="0 0 54 66" fill="#333"><circle cx="6" cy="36" r="5" /><circle cx="27" cy="36" r="5" /><circle cx="48" cy="36" r="5" /></svg>
            <span>更多</span>
          </div>
        </div>
      </div>

      <nav className="flex h-[116px] shrink-0 items-center bg-[#fcfcfc] pl-[82px]">
        <svg width="40" height="24" viewBox="0 0 40 24"><path d="M2 2L20 20L38 2" fill="none" stroke="#888" strokeWidth="3.2" strokeLinecap="round" /></svg>
        <svg className="ml-[110px]" width="48" height="48" viewBox="0 0 48 48"><rect x="3" y="3" width="42" height="42" rx="2" fill="none" stroke="#888" strokeWidth="3.8" /></svg>
        <svg className="ml-[139px]" width="50" height="50" viewBox="0 0 50 50"><circle cx="25" cy="25" r="23" fill="none" stroke="#888" strokeWidth="3.8" /></svg>
        <svg className="ml-[140px]" width="46" height="52" viewBox="0 0 46 52"><path d="M42 3V49L4 28Q2 26 4 24Z" fill="none" stroke="#888" strokeWidth="3.6" strokeLinejoin="round" /></svg>
        <svg className="ml-[145px]" width="42" height="46" viewBox="0 0 42 46" fill="none" stroke="#888" strokeWidth="4">
          <path d="M1 3H41M1 13.5H41" />
          <path d="M21 22V44M5 29L21 43L37 29" strokeWidth="3.2" />
        </svg>
      </nav>
    </main>
  );
}
